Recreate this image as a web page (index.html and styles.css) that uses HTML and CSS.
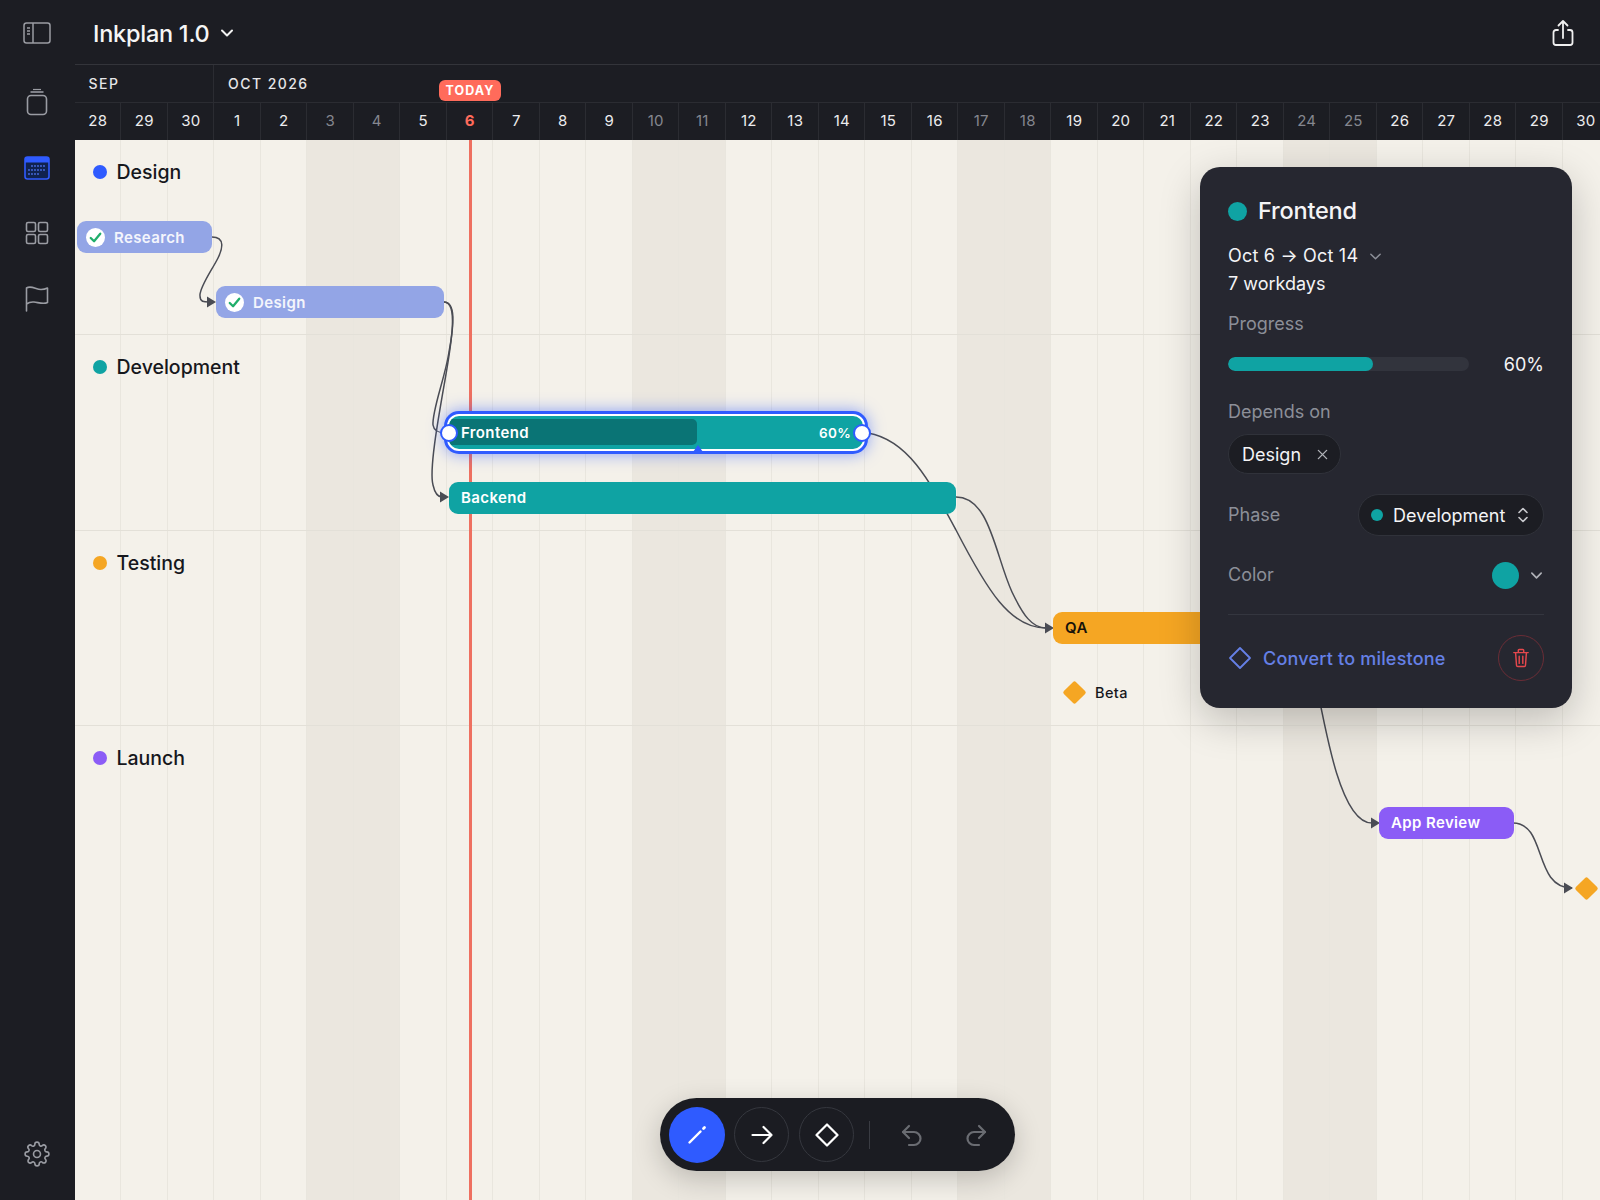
FILE: index.html
```html
<!DOCTYPE html>
<html lang="en">
<head>
<meta charset="utf-8">
<title>Inkplan 1.0</title>
<link rel="stylesheet" href="styles.css">
</head>
<body>
<div class="app">
  <aside class="sidebar">
    <svg class="side-icon first" viewBox="0 0 28 28" fill="none" stroke="#9a9ca3" stroke-width="1.5"><rect x="1" y="4" width="26" height="20" rx="2.5"/><path d="M10 4v20"/><path d="M4 9h3M4 12h3M4 15h3" stroke-width="1.3"/></svg>
    <svg class="side-icon second" viewBox="0 0 28 28" fill="none" stroke="#9a9ca3" stroke-width="1.6"><rect x="4.5" y="7.5" width="19" height="19" rx="3.5"/><path d="M7.5 4h13" /><path d="M10 1.5h8" stroke-width="1.2"/></svg>
    <svg class="side-icon" viewBox="0 0 28 28" fill="none"><rect x="2" y="3" width="24" height="22" rx="2.5" fill="#10224f" stroke="#2f5bff" stroke-width="1.6"/><path d="M2 8.500V5.500A2.500 2.500 0 0 1 4.500 3h19A2.500 2.500 0 0 1 26 5.500V8.500Z" fill="#2f5bff"/><g fill="#4a6fe8"><circle cx="9" cy="12" r=".9"/><circle cx="12" cy="12" r=".9"/><circle cx="15" cy="12" r=".9"/><circle cx="18" cy="12" r=".9"/><circle cx="21" cy="12" r=".9"/><circle cx="6" cy="16" r=".9"/><circle cx="9" cy="16" r=".9"/><circle cx="12" cy="16" r=".9"/><circle cx="15" cy="16" r=".9"/><circle cx="18" cy="16" r=".9"/><circle cx="21" cy="16" r=".9"/><circle cx="6" cy="20" r=".9"/><circle cx="9" cy="20" r=".9"/><circle cx="12" cy="20" r=".9"/><circle cx="15" cy="20" r=".9"/></g></svg>
    <svg class="side-icon" viewBox="0 0 28 28" fill="none" stroke="#9a9ca3" stroke-width="1.6"><rect x="3.500" y="3.500" width="9" height="9" rx="1.500"/><rect x="15.500" y="3.500" width="9" height="9" rx="1.500"/><rect x="3.500" y="15.500" width="9" height="9" rx="1.500"/><rect x="15.500" y="15.500" width="9" height="9" rx="1.500"/></svg>
    <svg class="side-icon" viewBox="0 0 28 28" fill="none" stroke="#9a9ca3" stroke-width="1.6" stroke-linejoin="round" stroke-linecap="round"><path d="M3.500 27V4C8 1 13 5.500 18 5.500C20.500 5.500 22.500 5 24.500 4V18.500C20.500 20.500 15.500 18.500 11 18C8 17.700 5.500 18.500 3.500 20"/></svg>
    <svg class="side-icon gear" viewBox="0 0 24 24" fill="none" stroke="#9a9ca3" stroke-width="1.5" stroke-linejoin="round"><circle cx="12" cy="12" r="3.200"/><path d="M19.400 15a1.650 1.650 0 0 0 .33 1.820l.06.06a2 2 0 1 1-2.830 2.830l-.06-.06a1.650 1.650 0 0 0-1.820-.33 1.650 1.650 0 0 0-1 1.510V21a2 2 0 0 1-4 0v-.09a1.650 1.650 0 0 0-1.080-1.510 1.650 1.650 0 0 0-1.820.33l-.06.06a2 2 0 1 1-2.830-2.830l.06-.06a1.650 1.650 0 0 0 .33-1.820 1.650 1.650 0 0 0-1.510-1H3a2 2 0 0 1 0-4h.09a1.650 1.650 0 0 0 1.510-1.080 1.650 1.650 0 0 0-.33-1.820l-.06-.06a2 2 0 1 1 2.830-2.830l.06.06a1.650 1.650 0 0 0 1.820.33H9a1.650 1.650 0 0 0 1-1.510V3a2 2 0 0 1 4 0v.09a1.650 1.650 0 0 0 1 1.510 1.650 1.650 0 0 0 1.820-.33l.06-.06a2 2 0 1 1 2.830 2.830l-.06.06a1.650 1.650 0 0 0-.33 1.820V9a1.650 1.650 0 0 0 1.510 1H21a2 2 0 0 1 0 4h-.09a1.650 1.650 0 0 0-1.510 1z"/></svg>
  </aside>
  <main class="main">
    <header class="topbar">
      <div class="title">Inkplan 1.0
        <svg class="title-chev" viewBox="0 0 14 14" fill="none" stroke="#f2f2f2" stroke-width="2" stroke-linecap="round" stroke-linejoin="round"><path d="M2 4.500l5 5 5-5"/></svg>
      </div>
      <svg class="share" viewBox="0 0 24 30" fill="none" stroke="#f0f0f0" stroke-width="1.800" stroke-linecap="round" stroke-linejoin="round"><path d="M7 12H5a2.500 2.500 0 0 0-2.500 2.500v10A2.500 2.500 0 0 0 5 27h14a2.500 2.500 0 0 0 2.500-2.500v-10A2.500 2.500 0 0 0 19 12h-2"/><path d="M12 20V3M7.500 7.500L12 3l4.500 4.500"/></svg>
    </header>
    <div class="months">
      <div class="month month-sep">SEP</div>
      <div class="month">OCT 2026</div>
      <div class="today-badge">TODAY</div>
    </div>
    <div class="days">
      <div class="day">28</div><div class="day">29</div><div class="day">30</div>
      <div class="day">1</div><div class="day">2</div><div class="day off">3</div><div class="day off">4</div><div class="day">5</div><div class="day today">6</div><div class="day">7</div><div class="day">8</div><div class="day">9</div><div class="day off">10</div><div class="day off">11</div><div class="day">12</div><div class="day">13</div><div class="day">14</div><div class="day">15</div><div class="day">16</div><div class="day off">17</div><div class="day off">18</div><div class="day">19</div><div class="day">20</div><div class="day">21</div><div class="day">22</div><div class="day">23</div><div class="day off">24</div><div class="day off">25</div><div class="day">26</div><div class="day">27</div><div class="day">28</div><div class="day">29</div><div class="day">30</div>
    </div>
    <section class="chart">
      <div class="grid">
        <i></i><i></i><i></i><i></i><i></i><i class="off"></i><i class="off"></i><i></i><i></i><i></i><i></i><i></i><i class="off"></i><i class="off"></i><i></i><i></i><i></i><i></i><i></i><i class="off"></i><i class="off"></i><i></i><i></i><i></i><i></i><i></i><i class="off"></i><i class="off"></i><i></i><i></i><i></i><i></i><i></i>
      </div>
      <div class="phase"><span class="dot dot-blue"></span>Design</div>
      <div class="phase"><span class="dot dot-teal"></span>Development</div>
      <div class="phase"><span class="dot dot-orange"></span>Testing</div>
      <div class="phase phase-last"><span class="dot dot-purple"></span>Launch</div>
      <div class="today-line"></div>

      <svg class="links" viewBox="74 140 1526 1060" fill="none" stroke="#4a4c54" stroke-width="1.500">
        <path d="M212 237C226 237 222 250 218 258C212 270 199 288 200 296C200 302 204 302 209 302"/>
        <path d="M444 302C456 302 454 325 449 352C445 378 432 410 433 425C434 432 440 433 446 433"/>
        <path d="M444 302C458 302 452 340 445 380C438 420 429 470 433 485C435 494 438 497 442 497"/>
        <path d="M868 433C908 440 929 480 956 530C987 590 1010 628 1046 628"/>
        <path d="M956 497C990 497 995 555 1012 592C1023 615 1032 628 1046 628"/>
        <path d="M1310 650C1325 730 1340 823 1372 823"/>
        <path d="M1513 823C1547 823 1533 888 1572 888"/>
        <g fill="#4a4c54" stroke="none">
          <path d="M207 296.500l9 5.500-9 5.500z"/>
          <path d="M440 491.500l9 5.500-9 5.500z"/>
          <path d="M1045 622.500l9 5.500-9 5.500z"/>
          <path d="M1371 817.500l9 5.500-9 5.500z"/>
          <path d="M1564 882.500l9 5.500-9 5.500z"/>
        </g>
      </svg>

      <div class="bar done bar-research"><span class="check"><svg viewBox="0 0 20 20" fill="none" stroke="#1fae6b" stroke-width="2.400" stroke-linecap="round" stroke-linejoin="round"><path d="M5 10.500l3.500 3.500L15 6"/></svg></span>Research</div>
      <div class="bar done bar-design"><span class="check"><svg viewBox="0 0 20 20" fill="none" stroke="#1fae6b" stroke-width="2.400" stroke-linecap="round" stroke-linejoin="round"><path d="M5 10.500l3.500 3.500L15 6"/></svg></span>Design</div>

      <div class="selected">
        <div class="sel-fill">
          <div class="sel-progress"></div>
          <span class="sel-label">Frontend</span>
          <span class="sel-pct">60%</span>
        </div>
        <span class="handle handle-l"></span>
        <span class="handle handle-r"></span>
        <span class="progress-tip"></span>
      </div>

      <div class="bar bar-backend">Backend</div>
      <div class="bar bar-qa">QA</div>
      <div class="milestone ms-beta"></div>
      <div class="ms-label">Beta</div>
      <div class="bar bar-review">App Review</div>
      <div class="milestone ms-end"></div>

      <div class="panel">
        <div class="panel-head"><span class="panel-dot"></span>Frontend</div>
        <div class="panel-dates">Oct 6 → Oct 14
          <svg class="mini-chev" viewBox="0 0 14 14" fill="none" stroke="#8c8f98" stroke-width="1.600" stroke-linecap="round" stroke-linejoin="round"><path d="M2 4.500l5 5 5-5"/></svg>
        </div>
        <div class="panel-work">7 workdays</div>
        <div class="panel-label label-progress">Progress</div>
        <div class="progress-row">
          <div class="track"><div class="track-fill"></div></div>
          <span>60%</span>
        </div>
        <div class="panel-label label-depends">Depends on</div>
        <div class="chip">Design
          <svg class="chip-x" viewBox="0 0 12 12" fill="none" stroke="#b0b2b8" stroke-width="1.500" stroke-linecap="round"><path d="M1.500 1.500l9 9M10.500 1.500l-9 9"/></svg>
        </div>
        <div class="row row-phase">
          <span class="panel-label">Phase</span>
          <div class="select"><span class="select-dot"></span>Development
            <svg class="updown" viewBox="0 0 12 18" fill="none" stroke="#c8c9cd" stroke-width="1.600" stroke-linecap="round" stroke-linejoin="round"><path d="M2 6.500L6 2.500l4 4M2 11.500l4 4 4-4"/></svg>
          </div>
        </div>
        <div class="row row-color">
          <span class="panel-label">Color</span>
          <div class="color-pick"><span class="swatch"></span>
            <svg class="mini-chev" viewBox="0 0 14 14" fill="none" stroke="#b0b2b8" stroke-width="1.800" stroke-linecap="round" stroke-linejoin="round"><path d="M2 4.500l5 5 5-5"/></svg>
          </div>
        </div>
        <div class="row row-convert">
          <div class="convert">
            <svg class="convert-icon" viewBox="0 0 24 24" fill="none" stroke="#6580e6" stroke-width="1.800" stroke-linejoin="round"><path d="M12 2l10 10-10 10L2 12z"/></svg>
            Convert to milestone
          </div>
          <div class="trash">
            <svg viewBox="0 0 20 22" fill="none" stroke="#e5484d" stroke-width="1.600" stroke-linecap="round" stroke-linejoin="round"><path d="M2 5h16M7 5V2.500A1 1 0 0 1 8 1.500h4a1 1 0 0 1 1 1V5M4 5l1 14a1.500 1.500 0 0 0 1.500 1.500h7A1.500 1.500 0 0 0 15 19l1-14M8 9v8M12 9v8"/></svg>
          </div>
        </div>
      </div>

      <div class="toolbar">
        <button class="tool tool-active"><svg viewBox="0 0 24 24" fill="none" stroke="#fff" stroke-width="2.400" stroke-linecap="round"><path d="M4.500 19.500L15.500 8.500"/><path d="M18.500 5.500l1-1" stroke-width="2.800"/></svg></button>
        <button class="tool"><svg viewBox="0 0 24 24" fill="none" stroke="#fff" stroke-width="2.200" stroke-linecap="round" stroke-linejoin="round"><path d="M2.500 12h19M13.500 4l8 8-8 8"/></svg></button>
        <button class="tool"><svg viewBox="0 0 24 24" fill="none" stroke="#fff" stroke-width="2.200" stroke-linejoin="round"><path d="M12 1.500L22.500 12 12 22.500 1.500 12z"/></svg></button>
        <span class="tool-sep"></span>
        <svg class="hist hist-undo" viewBox="0 0 24 24" fill="none" stroke="#6a6c72" stroke-width="2.200" stroke-linecap="round" stroke-linejoin="round"><path d="M9 3L3 9l6 6"/><path d="M3 9h11a6.500 6.500 0 0 1 0 13H9"/></svg>
        <svg class="hist hist-redo" viewBox="0 0 24 24" fill="none" stroke="#6a6c72" stroke-width="2.200" stroke-linecap="round" stroke-linejoin="round"><path d="M15 3l6 6-6 6"/><path d="M21 9H10a6.500 6.500 0 0 0 0 13h5"/></svg>
      </div>
    </section>
  </main>
</div>
</body>
</html>
```
FILE: styles.css
```css
* { box-sizing: border-box; }
html, body { margin: 0; height: 100%; overflow: hidden; }
body { font-family: Inter, "Liberation Sans", sans-serif; background: #1c1d23; color: #f4f4f4; }
.app { display: flex; width: 1600px; height: 1200px; }

.sidebar { width: 74.500px; flex: none; background: #1c1d23; display: flex; flex-direction: column; align-items: center; padding: 19px 0 33px; }
.side-icon { width: 28px; height: 28px; margin-bottom: 37px; flex: none; }
.side-icon.first { margin-bottom: 41px; }
.side-icon.second { margin-bottom: 38px; }
.side-icon.gear { width: 26px; height: 26px; margin: auto 0 0; }

.main { flex: 1; min-width: 0; display: flex; flex-direction: column; background: #1c1d23; }
.topbar { height: 65px; flex: none; border-bottom: 1px solid #33343a; display: flex; align-items: center; justify-content: space-between; padding: 2px 25px 0 18.500px; }
.title { font-size: 23.500px; font-weight: 500; letter-spacing: -.25px; display: flex; align-items: center; gap: 10px; color: #f6f6f6; }
.title-chev { width: 14px; height: 14px; }
.share { width: 24px; height: 30px; }

.months { height: 38px; flex: none; display: flex; position: relative; border-bottom: 1px solid #2b2c32; }
.month { font-size: 14px; font-weight: 500; letter-spacing: 1.450px; padding: 0 0 0 14px; display: flex; align-items: center; color: #e6e6e8; }
.month-sep { width: 139.500px; border-right: 1px solid #2b2c32; }
.today-badge { position: absolute; left: 364.500px; top: 15px; width: 62px; height: 21px; border-radius: 6px; background: #ff6b5b; color: #fff; font-size: 12.500px; font-weight: 700; letter-spacing: 1.100px; display: flex; align-items: center; justify-content: center; }

.days { height: 37px; flex: none; display: flex; overflow: hidden; }
.day { flex: none; width: 46.500px; padding-left: 1px; font-size: 15px; font-weight: 400; text-align: center; line-height: 36px; letter-spacing: .2px; color: #ececee; border-right: 1px solid #2b2c32; }
.day.off { color: #85878f; }
.day.today { color: #ff6b5b; font-weight: 700; }

.chart { position: relative; flex: 1; min-height: 0; overflow: hidden; background: #f4f1ea; color: #16171c; }
.grid { position: absolute; inset: 0 auto 0 0; display: flex; }
.grid i { display: block; flex: none; width: 46.500px; border-right: 1px solid #e9e6de; }
.grid i.off { background: #ebe7df; }

.phase { position: relative; height: 195.300px; border-bottom: 1px solid #e3e0d8; padding: 20px 0 0 18.500px; font-size: 19.500px; font-weight: 500; line-height: 24px; display: flex; align-items: flex-start; gap: 9.500px; }
.phase-last { border-bottom: 0; }
.dot { width: 14px; height: 14px; border-radius: 50%; margin-top: 5px; flex: none; }
.dot-blue { background: #2f5bff; }
.dot-teal { background: #0fa3a3; }
.dot-orange { background: #f5a623; }
.dot-purple { background: #8b5cf6; }

.today-line { position: absolute; left: 394.500px; top: 0; bottom: 0; width: 2.500px; background: #ee7060; }
.links { position: absolute; left: -.5px; top: 0; width: 1526px; height: 1060px; }

.bar { position: absolute; height: 32px; border-radius: 9px; display: flex; align-items: center; font-size: 15px; font-weight: 600; letter-spacing: .38px; color: #fff; padding-left: 12px; padding-bottom: 1px; }
.done { background: #93a5e6; gap: 9px; padding-left: 9px; padding-bottom: 0; color: #f4f5fc; }
.check { width: 19px; height: 19px; border-radius: 50%; background: #fff; display: flex; }
.check svg { width: 19px; height: 19px; }
.bar-research { left: 2.500px; top: 81px; width: 135px; }
.bar-design { left: 141.500px; top: 146px; width: 228px; }
.bar-backend { left: 374.500px; top: 341.500px; width: 507px; background: #0fa3a3; }
.bar-qa { left: 978.500px; top: 472px; width: 300px; background: #f5a623; color: #17130a; }
.bar-review { left: 1304.500px; top: 667px; width: 135px; background: #8b5cf6; }

.selected { position: absolute; left: 369.500px; top: 271px; width: 424px; height: 43px; border: 3px solid #2f5bff; border-radius: 15px; background: #fff; padding: 2px; box-shadow: 0 0 16px rgba(47, 91, 255, .55); }
.sel-fill { position: relative; height: 100%; border-radius: 10px; background: #0fa3a3; overflow: hidden; display: flex; align-items: center; justify-content: space-between; padding: 0 12px 0 12px; font-size: 15px; font-weight: 600; letter-spacing: .38px; color: #fff; }
.sel-progress { position: absolute; left: 0; top: 3px; width: 248px; height: 26px; background: #0a7475; border-radius: 0 5px 5px 0; }
.sel-label, .sel-pct { position: relative; }
.sel-pct { font-size: 13.500px; letter-spacing: .3px; }
.handle { position: absolute; top: 50%; width: 18px; height: 18px; margin-top: -9px; border-radius: 50%; background: #fff; border: 2px solid #2f5bff; }
.handle-l { left: -7px; }
.handle-r { right: -6px; }
.progress-tip { position: absolute; left: 246px; bottom: -1px; width: 0; height: 0; border-left: 5px solid transparent; border-right: 5px solid transparent; border-bottom: 7px solid #2f5bff; }

.milestone { position: absolute; width: 17px; height: 17px; background: #f5a623; border-radius: 2px; transform: rotate(45deg); }
.ms-beta { left: 991px; top: 543.500px; }
.ms-end { left: 1503px; top: 739.500px; }
.ms-label { position: absolute; left: 1020.500px; top: 545px; font-size: 14.500px; font-weight: 500; letter-spacing: .4px; line-height: 16px; }

.panel { position: absolute; left: 1125.500px; top: 27px; width: 372px; height: 541px; padding: 29px 28px 0; border-radius: 20px; background: #262730; color: #f4f4f6; box-shadow: 0 12px 40px rgba(0, 0, 0, .22); font-size: 18px; }
.panel-head { display: flex; align-items: center; gap: 11px; font-size: 23.500px; font-weight: 500; line-height: 30px; letter-spacing: -.2px; }
.panel-dot { width: 19px; height: 19px; border-radius: 50%; background: #0fa3a3; }
.panel-dates { display: flex; align-items: center; gap: 11px; margin-top: 16px; line-height: 28px; letter-spacing: .2px; }
.mini-chev { width: 13px; height: 13px; }
.panel-work { line-height: 27px; }
.panel-label { color: #8c8f98; line-height: 24px; }
.label-progress { margin-top: 15px; }
.progress-row { display: flex; align-items: center; justify-content: space-between; margin-top: 16px; height: 24px; }
.track { width: 241px; height: 14px; border-radius: 7px; background: #32343d; overflow: hidden; }
.track-fill { width: 60%; height: 100%; border-radius: 7px; background: #0fa3a3; }
.label-depends { margin-top: 24px; }
.chip { display: inline-flex; align-items: center; gap: 16px; height: 40px; margin-top: 10px; padding: 0 12px 0 13px; border-radius: 20px; background: #1c1d23; border: 1px solid #30323a; }
.chip-x { width: 11px; height: 11px; }
.row { display: flex; align-items: center; justify-content: space-between; }
.row-phase { margin-top: 20px; }
.select { display: flex; align-items: center; height: 42px; padding: 0 14px 0 12px; border-radius: 21px; background: #1c1d23; border: 1px solid #30323a; width: 186px; }
.select-dot { width: 12px; height: 12px; border-radius: 50%; background: #0fa3a3; margin-right: 10px; }
.updown { width: 12px; height: 18px; margin-left: auto; }
.row-color { margin-top: 19px; height: 40px; }
.color-pick { display: flex; align-items: center; gap: 11px; margin-right: 1px; }
.swatch { width: 27px; height: 27px; border-radius: 50%; background: #0fa3a3; }
.row-convert { margin-top: 19px; border-top: 1px solid #34363f; padding-top: 20px; }
.convert { display: flex; align-items: center; gap: 11px; color: #6580e6; font-weight: 500; letter-spacing: .2px; }
.convert-icon { width: 24px; height: 24px; }
.trash { width: 46px; height: 46px; border-radius: 50%; border: 1px solid #6b2d36; display: flex; align-items: center; justify-content: center; }
.trash svg { width: 18px; height: 20px; }

.toolbar { position: absolute; left: 585.500px; top: 958px; width: 355px; height: 73px; border-radius: 37px; background: #1b1c22; box-shadow: 0 8px 28px rgba(0, 0, 0, .2); display: flex; align-items: center; padding: 0 9px; }
.tool { width: 55px; height: 55px; border-radius: 50%; border: 1px solid #35373e; background: transparent; padding: 0; margin-right: 10px; display: flex; align-items: center; justify-content: center; }
.tool svg { width: 24px; height: 24px; }
.tool-active { width: 56px; height: 56px; background: #2f5bff; border: 0; margin-right: 9px; }
.tool-sep { width: 1px; height: 28px; background: #3a3c43; margin-left: 5px; }
.hist { width: 24px; height: 24px; }
.hist-undo { margin-left: 30px; }
.hist-redo { margin-left: 40px; }
```
